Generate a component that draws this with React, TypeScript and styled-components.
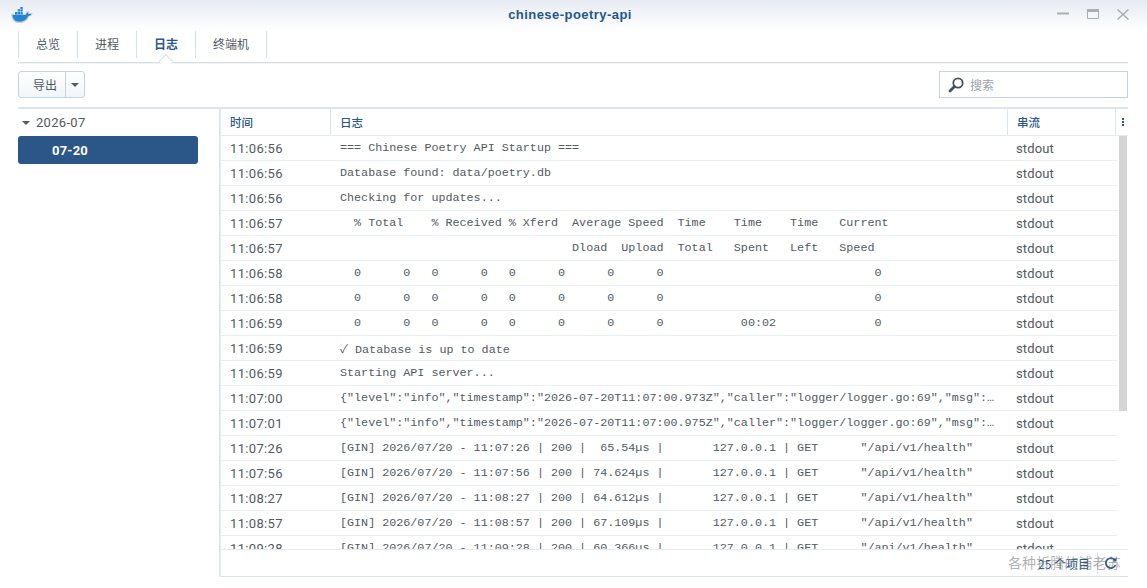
import React from "react";
import styled, { createGlobalStyle } from "styled-components";

const Global = createGlobalStyle`
  html, body { margin: 0; padding: 0; background: #fff; }
  body { font-family: Roboto, "Noto Sans CJK SC", sans-serif; overflow: hidden; }
`;
const Win = styled.div`
  width: 1147px; height: 588px; display: flex; flex-direction: column; position: relative; overflow: hidden; background: #fff;
`;
const TitleBar = styled.div`
  height: 31px; flex: none; display: grid; grid-template-columns: 1fr auto 1fr; align-items: center;
  padding: 0 18px 3px 11px; box-sizing: border-box;
  background: linear-gradient(#e6ebf2, #ffffff);
`;
const Title = styled.div`
  font: bold 13px "Liberation Sans", sans-serif; color: #25568a; letter-spacing: 0.45px;
`;
const WinBtns = styled.div`
  justify-self: end; display: flex; gap: 18px; align-items: center;
`;
const Body = styled.div`
  flex: 1; min-height: 0; display: flex; flex-direction: column; padding: 0 19px 11px 18px;
`;
const Tabs = styled.div`
  height: 31px; flex: none; display: flex; border-bottom: 1px solid #d9dee3; box-shadow: 0 1px 0 #f1f3f5; box-sizing: content-box;
`;
const Tab = styled.div<{ $active?: boolean }>`
  position: relative; padding: 0 17px 3px; display: flex; align-items: center; height: 24px; margin-top: 0;
  align-self: flex-start; border-right: 1px solid #d5e1ee;
  font: ${(p) => (p.$active ? "bold" : "normal")} 12px "Noto Sans CJK SC", sans-serif;
  color: ${(p) => (p.$active ? "#2a5a8c" : "#505a64")};
  &:first-child { border-left: 1px solid #d5e1ee; }
`;
const Notch = styled.span`
  position: absolute; left: 50%; margin-left: -5px; top: 25px; width: 9px; height: 9px; background: #fff;
  border-left: 1px solid #d9dee3; border-top: 1px solid #d9dee3; transform: rotate(45deg) scaleX(1);
`;
const Toolbar = styled.div`
  flex: none; height: 44px; padding-top: 8px; box-sizing: border-box; display: flex; justify-content: space-between; align-items: flex-start;
`;
const SplitBtn = styled.div`
  display: flex; height: 27px; width: 67px; box-sizing: border-box; border: 1px solid #c6d4e2; border-radius: 3px;
  background: linear-gradient(#fff, #f1f5f9); margin-top: 0;
`;
const BtnMain = styled.div`
  width: 47px; display: flex; align-items: center; justify-content: center; padding-left: 6px; box-sizing: border-box; border-right: 1px solid #c6d4e2;
  font: 12px "Noto Sans CJK SC", sans-serif; color: #505a64;
`;
const BtnCaret = styled.div`
  flex: 1; display: flex; align-items: center; justify-content: center;
`;
const Caret = styled.span`
  width: 0; height: 0; border-left: 4px solid transparent; border-right: 4px solid transparent; border-top: 4px solid #505a64;
`;
const Search = styled.div`
  width: 189px; height: 27px; box-sizing: border-box; border: 1px solid #c9d3de; display: flex; align-items: center; gap: 6px; padding: 0 0 0 8px;
  font: 12px "Noto Sans CJK SC", sans-serif; color: #9aa3ac; background: #fff;
`;
const Main = styled.div`
  flex: 1; min-height: 0; display: flex; border-top: 2px solid #dbe5ef;
`;
const Side = styled.div`
  width: 202px; flex: none; border-right: 1px solid #dbe5ef; box-sizing: border-box;
`;
const YearRow = styled.div`
  height: 27px; display: flex; align-items: center; gap: 6px; padding-left: 4px; font-size: 13px; letter-spacing: 0.3px; color: #505a64;
`;
const DayRow = styled.div`
  width: 180px; height: 28px; border-radius: 3px; background: #2a5788; color: #fff; font-weight: 700; font-size: 13px;
  display: flex; align-items: center; padding-left: 34px; box-sizing: border-box; letter-spacing: 0.2px;
`;
const Grid = styled.div`
  flex: 1; min-width: 0; display: flex; flex-direction: column; position: relative; border-left: 1px solid #e6ebf0;
`;
const Head = styled.div`
  flex: none; height: 27px; display: grid; grid-template-columns: 110px 677px 108px 1fr; border-bottom: 1px solid #e3eaf2; box-sizing: border-box;
`;
const HeadCell = styled.div`
  display: flex; align-items: center; padding-left: 9px; border-right: 1px solid #dbe5ef; font: 500 11.5px "Noto Sans CJK SC", sans-serif; color: #2a5a8c;
  &:last-child { border-right: 0; padding: 0; justify-content: center; }
`;
const Dots = styled.div`
  display: flex; flex-direction: column; gap: 1px; margin-left: 1px;
  span { width: 2px; height: 2px; background: #2a5a8c; display: block; }
`;
const RowsArea = styled.div`
  flex: 1; min-height: 0; overflow: hidden; position: relative; padding-right: 11px;
`;
const Row = styled.div`
  height: 25px; box-sizing: border-box; display: grid; grid-template-columns: 110px 677px 1fr; border-bottom: 1px solid #e9eef3; align-items: center;
  font-size: 13px; color: #505a64;
`;
const TimeCell = styled.div`
  padding-left: 9px; letter-spacing: 0.35px;
`;
const LogCell = styled.div`
  padding-left: 9px; padding-right: 8px; font: 11.72px "Liberation Mono", "Noto Sans CJK SC", monospace; white-space: pre; overflow: hidden; text-overflow: ellipsis; color: #505a64;
`;
const StreamCell = styled.div`
  padding-left: 8px; letter-spacing: 0.15px;
`;
const Thumb = styled.div`
  position: absolute; right: 1px; top: 0; width: 8px; height: 275px; background: #d5d5d5;
`;
const Footer = styled.div`
  flex: none; height: 28px; border-top: 1px solid #e3eaf2; border-bottom: 1px solid #d5e1ee; box-sizing: border-box; display: flex; align-items: center; justify-content: flex-end;
  font: 12px "Noto Sans CJK SC", sans-serif; color: #2a5a8c; padding-right: 11px;
`;
const Count = styled.span`
  padding-right: 7px; margin-right: 6px; border-right: 1px solid #d5e1ee; height: 22px; display: flex; align-items: center;
`;
const Watermark = styled.div`
  position: absolute; left: 1008px; top: 552px; font: 14px "Noto Sans CJK SC", sans-serif; color: rgba(110, 110, 110, 0.55); letter-spacing: 0.1px; white-space: nowrap;
`;

const rows: [string, string][] = [
  ["11:06:56", "=== Chinese Poetry API Startup ==="],
  ["11:06:56", "Database found: data/poetry.db"],
  ["11:06:56", "Checking for updates..."],
  ["11:06:57", "  % Total    % Received % Xferd  Average Speed  Time    Time    Time   Current"],
  ["11:06:57", "                                 Dload  Upload  Total   Spent   Left   Speed"],
  ["11:06:58", "  0      0   0      0   0      0      0      0                              0"],
  ["11:06:58", "  0      0   0      0   0      0      0      0                              0"],
  ["11:06:59", "  0      0   0      0   0      0      0      0           00:02              0"],
  ["11:06:59", "✓ Database is up to date"],
  ["11:06:59", "Starting API server..."],
  ["11:07:00", '{"level":"info","timestamp":"2026-07-20T11:07:00.973Z","caller":"logger/logger.go:69","msg":"Starting API server"}'],
  ["11:07:01", '{"level":"info","timestamp":"2026-07-20T11:07:00.975Z","caller":"logger/logger.go:69","msg":"Listening on port"}'],
  ["11:07:26", '[GIN] 2026/07/20 - 11:07:26 | 200 |  65.54µs |       127.0.0.1 | GET      "/api/v1/health"'],
  ["11:07:56", '[GIN] 2026/07/20 - 11:07:56 | 200 | 74.624µs |       127.0.0.1 | GET      "/api/v1/health"'],
  ["11:08:27", '[GIN] 2026/07/20 - 11:08:27 | 200 | 64.612µs |       127.0.0.1 | GET      "/api/v1/health"'],
  ["11:08:57", '[GIN] 2026/07/20 - 11:08:57 | 200 | 67.109µs |       127.0.0.1 | GET      "/api/v1/health"'],
  ["11:09:28", '[GIN] 2026/07/20 - 11:09:28 | 200 | 60.366µs |       127.0.0.1 | GET      "/api/v1/health"'],
];

const Whale = () => (
  <svg width="22" height="17" viewBox="0 0 22 17">
    <path d="M1 8.5h13.5c.6-1.6 1.4-2.6 2.4-2.8.5.8.9 1.4 1 2 1-.5 2-.4 3 .1-.6 1.4-1.8 2-3.2 2.1C16.500 14 12.500 16.500 8 16.500 3.500 16.500 1.200 13 1 8.500z" fill="#fff" stroke="#c9ced4" strokeWidth="1.4" />
    <path d="M1.500 9h13.300c.5-1.400 1.100-2.300 1.900-2.600.4.700.7 1.300.8 1.900 1-.4 1.900-.4 2.700 0-.6 1-1.600 1.500-3 1.600C15.800 13.500 12.300 15.700 8 15.700 4 15.700 1.900 13 1.500 9z" fill="#1f86d6" />
    <path d="M4 6h2.300v2.500H4zM6.700 6H9v2.500H6.700zM9.400 6h2.300v2.500H9.400zM6.700 3.300H9v2.300H6.700zM9.400 3.300h2.300v2.300H9.400zM9.400 1h2.300v2H9.400z" fill="#1f86d6" />
  </svg>
);
const Minimize = () => (
  <svg width="12" height="10" viewBox="0 0 12 10"><path d="M0 4.500h12" stroke="#a9afb5" strokeWidth="2" /></svg>
);
const Maximize = () => (
  <svg width="12" height="10" viewBox="0 0 12 10"><path d="M.5.500h11v9H.5z" fill="none" stroke="#a9afb5" /><path d="M0 0h12v3H0z" fill="#a9afb5" /></svg>
);
const Close = () => (
  <svg width="12" height="11" viewBox="0 0 12 11"><path d="M.5.500l11 10M11.500.500l-11 10" stroke="#a9afb5" strokeWidth="1.500" /></svg>
);
const Magnifier = () => (
  <svg width="16" height="16" viewBox="0 0 16 16">
    <circle cx="10" cy="6" r="4.700" fill="none" stroke="#45505c" strokeWidth="1.800" />
    <path d="M6.500 9.500L2 14" stroke="#45505c" strokeWidth="2.800" strokeLinecap="round" />
  </svg>
);
const Refresh = () => (
  <svg width="13" height="13" viewBox="0 0 13 13">
    <path d="M11 3.200A5 5 0 1 0 11.500 8" fill="none" stroke="#2a5a8c" strokeWidth="1.800" />
    <path d="M8.500 4.500h4v-4z" fill="#2a5a8c" />
  </svg>
);

export default function App() {
  return (
    <Win>
      <Global />
      <TitleBar>
        <Whale />
        <Title>chinese-poetry-api</Title>
        <WinBtns>
          <Minimize />
          <Maximize />
          <Close />
        </WinBtns>
      </TitleBar>
      <Body>
        <Tabs>
          <Tab>总览</Tab>
          <Tab>进程</Tab>
          <Tab $active>日志<Notch /></Tab>
          <Tab>终端机</Tab>
        </Tabs>
        <Toolbar>
          <SplitBtn>
            <BtnMain>导出</BtnMain>
            <BtnCaret><Caret /></BtnCaret>
          </SplitBtn>
          <Search><Magnifier />搜索</Search>
        </Toolbar>
        <Main>
          <Side>
            <YearRow><Caret />2026-07</YearRow>
            <DayRow>07-20</DayRow>
          </Side>
          <Grid>
            <Head>
              <HeadCell>时间</HeadCell>
              <HeadCell>日志</HeadCell>
              <HeadCell>串流</HeadCell>
              <HeadCell><Dots><span /><span /><span /></Dots></HeadCell>
            </Head>
            <RowsArea>
              {rows.map(([t, l], i) => (
                <Row key={i}>
                  <TimeCell>{t}</TimeCell>
                  <LogCell>{l}</LogCell>
                  <StreamCell>stdout</StreamCell>
                </Row>
              ))}
              <Thumb />
            </RowsArea>
            <Footer>
              <Count>25 个项目</Count>
              <Refresh />
            </Footer>
          </Grid>
        </Main>
      </Body>
      <Watermark>各种折腾的浦老苏</Watermark>
    </Win>
  );
}
